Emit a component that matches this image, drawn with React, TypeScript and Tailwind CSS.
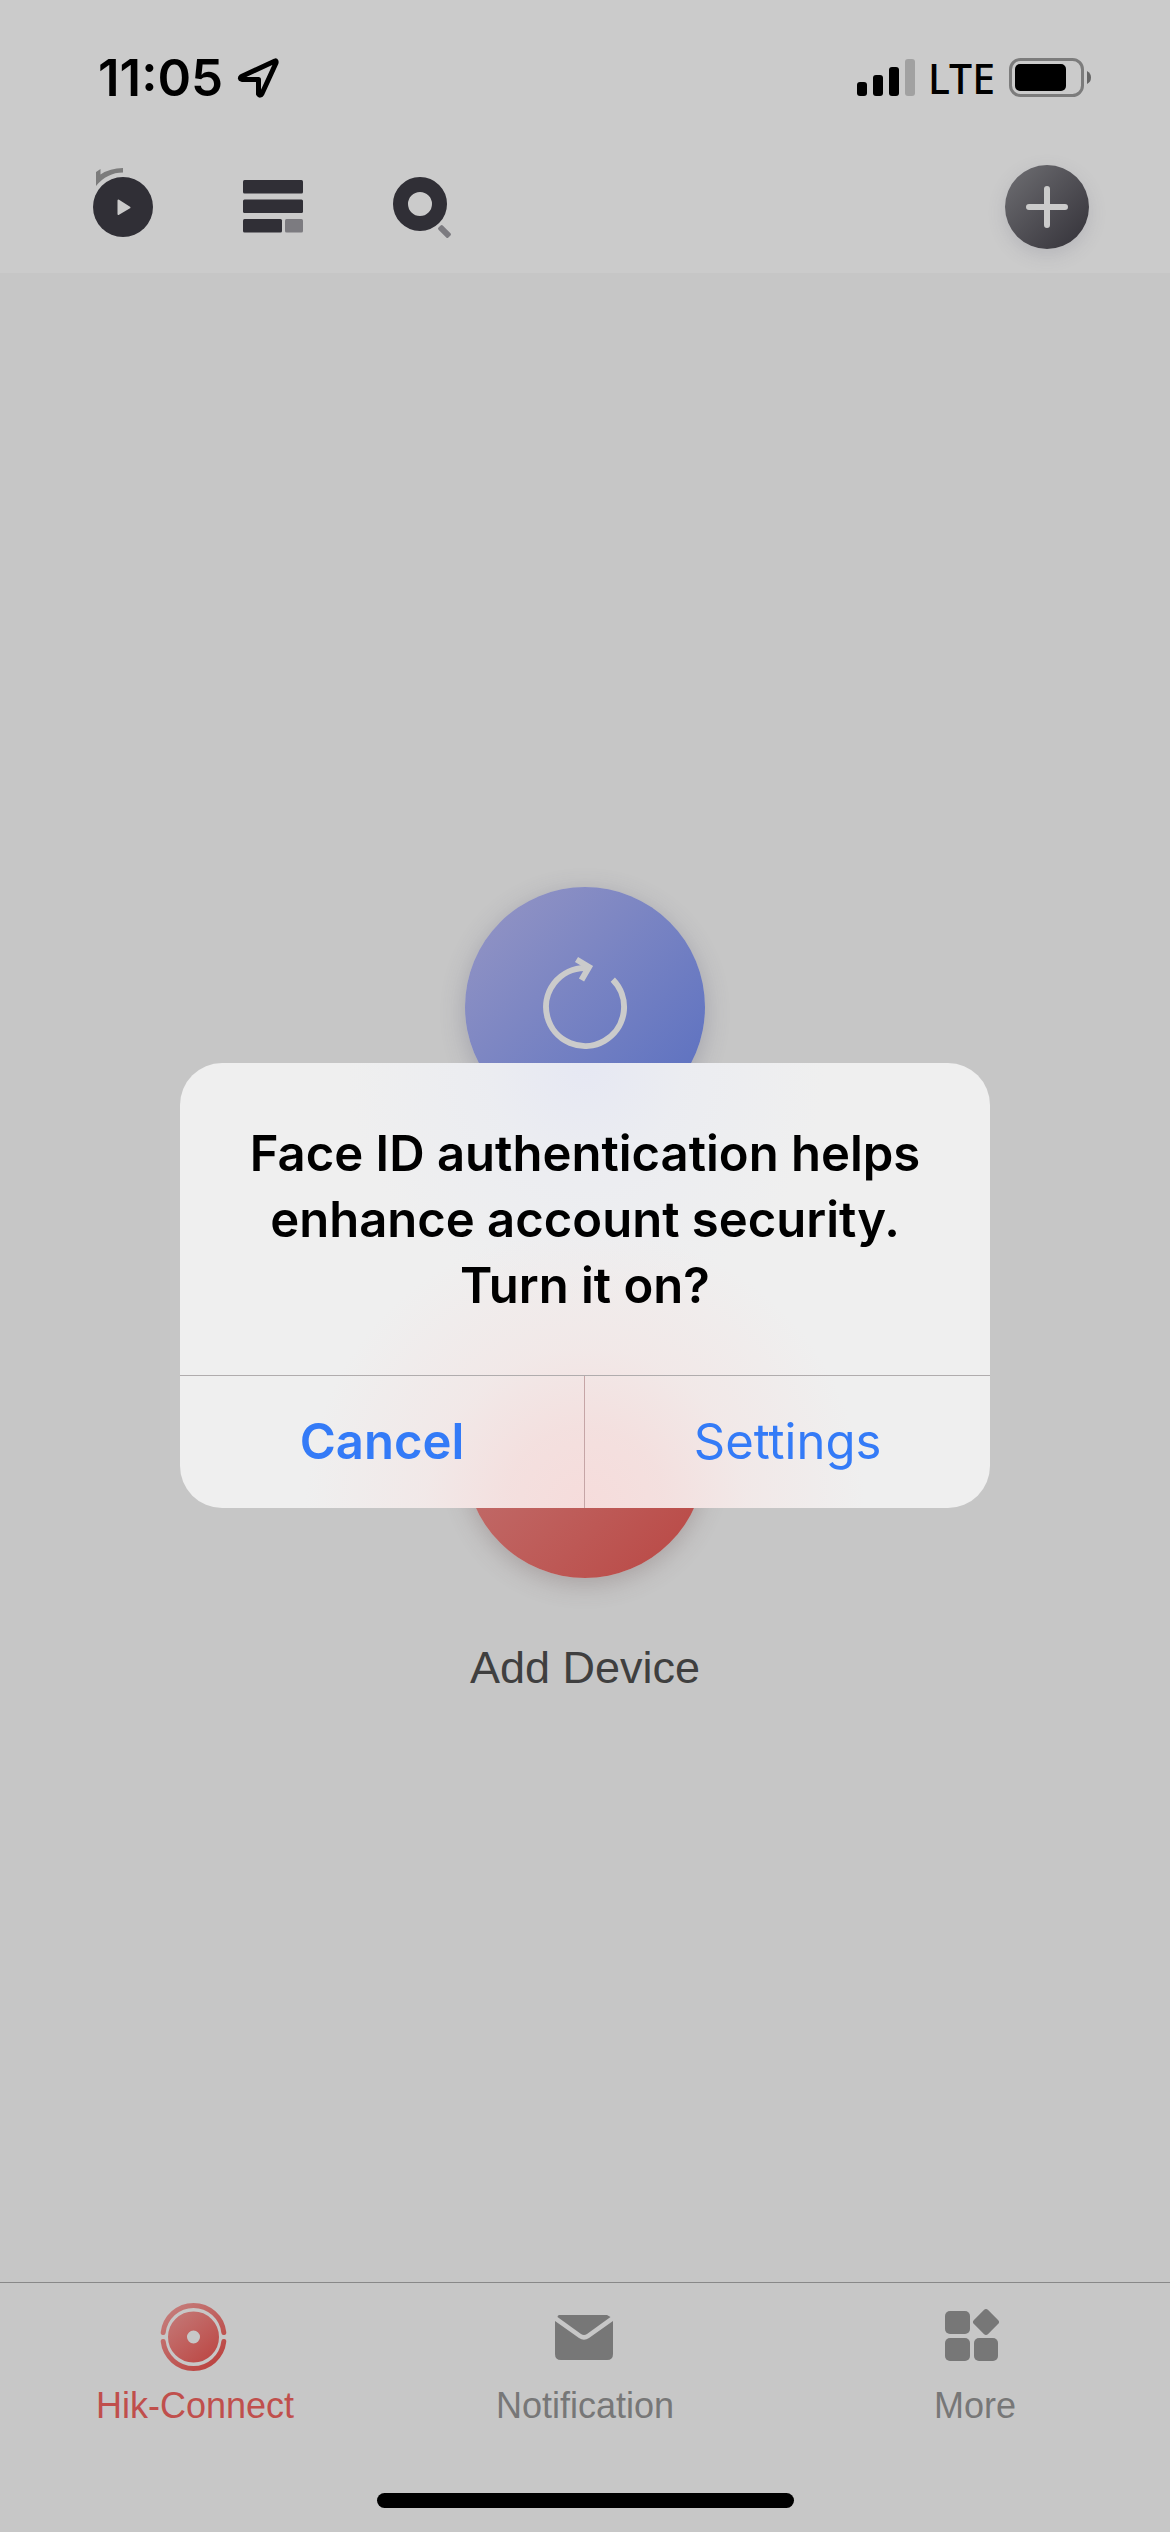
import type { ReactNode } from "react";

const uiFont = "font-[Inter,Roboto,sans-serif]";
const bodyFont = "font-['Liberation_Sans',Arial,sans-serif]";

function StatusBar() {
  return (
    <div className={`flex h-[156px] items-start justify-between pt-[42px] pr-[78px] pl-[98px] text-black ${uiFont}`}>
      <div className="flex h-[72px] items-center gap-[14px]">
        <span className="text-[51px] leading-[72px] font-semibold">11:05</span>
        <svg className="h-[40px] w-[42px]" viewBox="0 0 42 40" fill="none" aria-label="Location in use">
          <path d="M38 3 L4.500 18.500 Q2 20.500 5 21.500 L21.500 21.500 L21.500 36 Q23 38.500 25 35.500 L39 5 Q39.500 2.500 38 3 Z" stroke="black" strokeWidth="5" strokeLinejoin="round" />
        </svg>
      </div>
      <div className="flex h-[72px] items-center">
        <svg className="h-[38px] w-[60px]" viewBox="0 0 60 38" aria-label="Signal strength">
          <rect x="1" y="23" width="10" height="14" rx="3" />
          <rect x="17" y="16" width="10" height="21" rx="3" />
          <rect x="33" y="8" width="10" height="29" rx="3" />
          <rect x="49" y="0" width="10" height="37" rx="3" fill="#a1a1a1" />
        </svg>
        <span className="ml-[12px] font-['Noto_Sans',sans-serif] text-[41px] leading-[72px] font-medium">LTE</span>
        <svg className="ml-[14px] h-[40px] w-[83px]" viewBox="0 0 83 40" aria-label="Battery">
          <rect x="1.500" y="1.500" width="72" height="36" rx="10" fill="none" stroke="#7c7c7c" strokeWidth="3" />
          <rect x="6" y="6" width="51" height="27" rx="5" />
          <path d="M78 13 Q82 15 82 19.500 Q82 24 78 26 Z" fill="#666666" />
        </svg>
      </div>
    </div>
  );
}

function Toolbar() {
  return (
    <div className="flex h-[117px] items-start justify-between pr-[81px] pl-[93px]">
      <div className="flex items-start gap-[90px] pt-[9px]">
        <button type="button" aria-label="Playback">
          <svg className="h-[72px] w-[60px]" viewBox="0 0 60 72">
            <path d="M3 7 L7.500 4 L7.500 9.500 Q17 3 30 3 L30 7.500 Q14 7.500 3 21 Z" fill="#7c7c7c" />
            <circle cx="30" cy="42" r="30" fill="#302f36" />
            <path d="M25.500 35.500 L36.500 42.500 L25.500 49 Z" fill="#cbcbcb" stroke="#cbcbcb" strokeWidth="2" strokeLinejoin="round" />
          </svg>
        </button>
        <button type="button" aria-label="List view">
          <svg className="h-[72px] w-[60px]" viewBox="0 0 60 72">
            <g fill="#302f36">
              <rect y="15" width="60" height="13.500" rx="1.500" />
              <rect y="34.500" width="60" height="13.500" rx="1.500" />
              <rect y="54" width="39" height="13.500" rx="1.500" />
            </g>
            <rect x="42" y="54" width="18" height="13.500" rx="1.500" fill="#7c7b80" />
          </svg>
        </button>
        <button type="button" aria-label="Search">
          <svg className="h-[74px] w-[60px]" viewBox="0 0 60 74">
            <circle cx="27" cy="39" r="19.500" fill="none" stroke="#302f36" strokeWidth="15" />
            <rect x="44.500" y="63.500" width="14" height="6" rx="1.500" transform="rotate(45 51.500 66.500)" fill="#7c7b80" />
          </svg>
        </button>
      </div>
      <button
        type="button"
        aria-label="Add"
        className="mt-[9px] flex size-[84px] items-center justify-center rounded-full bg-linear-to-br from-[#707074] to-[#333138] shadow-[0_6px_18px_rgba(90,90,110,0.18)]"
      >
        <svg className="size-[42px]" viewBox="0 0 42 42" stroke="#cbcbcb" strokeWidth="6" strokeLinecap="round">
          <path d="M21 3 V39 M3 21 H39" />
        </svg>
      </button>
    </div>
  );
}

function Actions() {
  return (
    <main className="flex flex-1 flex-col items-center justify-center gap-[211px] bg-[#c6c6c6] pt-[26px]">
      <button
        type="button"
        aria-label="Refresh"
        className="flex size-[240px] items-center justify-center rounded-full bg-linear-to-br from-[#9696c4] to-[#576dc0] shadow-[0_6px_24px_rgba(80,80,110,0.3)]"
      >
        <svg className="size-[102px]" viewBox="0 0 102 102" fill="none" stroke="#cbcbcb" strokeWidth="6">
          <path d="M78.800 23.600 A39 39 0 1 1 51 12 L54 12" />
          <path d="M42.500 3.500 L55 11 L47.500 24" />
        </svg>
      </button>
      <div className="flex flex-col items-center gap-[64px]">
        <button
          type="button"
          aria-label="Add Device"
          className="size-[240px] rounded-full bg-linear-to-br from-[#c37a7a] to-[#b94542] shadow-[0_6px_24px_rgba(100,75,75,0.3)]"
        />
        <span className="text-[45px] leading-[52px] text-[#3f3f3f]">Add Device</span>
      </div>
    </main>
  );
}

function Tab({ label, active, children }: { label: string; active?: boolean; children: ReactNode }) {
  return (
    <a
      href="#"
      aria-current={active ? "page" : undefined}
      className={`flex flex-1 flex-col items-center gap-[12px] pt-[18px] ${active ? "text-[#c04f4c]" : "text-[#777777]"}`}
    >
      <svg className="h-[72px] w-[72px]" viewBox="0 0 72 72">
        {children}
      </svg>
      <span className="text-[36px] leading-[42px]">{label}</span>
    </a>
  );
}

function TabBar() {
  return (
    <nav className="flex h-[250px] flex-col border-t border-[#888888] bg-[#c7c7c7]">
      <div className="flex flex-1">
        <Tab label="Hik-Connect" active>
          <defs>
            <linearGradient id="brand" gradientUnits="userSpaceOnUse" x1="12" y1="10" x2="54" y2="62">
              <stop offset="0" stopColor="#c47a78" />
              <stop offset="1" stopColor="#bc4643" />
            </linearGradient>
          </defs>
          <g fill="none" stroke="url(#brand)" strokeWidth="5" strokeLinecap="round">
            <path d="M4.200 31.500 A30.500 30.500 0 0 1 64.800 31.500" />
            <path d="M4.200 40.500 A30.500 30.500 0 0 0 64.800 40.500" />
          </g>
          <circle cx="34.500" cy="36" r="16" fill="none" stroke="url(#brand)" strokeWidth="19" />
        </Tab>
        <Tab label="Notification">
          <g fill="currentColor" transform="translate(-1 0)">
            <path d="M11 14 H59 L62.500 16 L39 33 Q36 35 33 33 L9.500 16 Q9.500 14.500 11 14 Z" />
            <path d="M7 20 L31 37 Q36 40.500 41 37 L65 20 V53 Q65 59 59 59 H13 Q7 59 7 53 Z" />
          </g>
        </Tab>
        <Tab label="More">
          <g fill="currentColor">
            <rect x="6" y="10" width="25" height="23" rx="5" />
            <rect x="6" y="37" width="25" height="23" rx="5" />
            <rect x="35" y="37" width="24" height="23" rx="5" />
            <rect x="37" y="11" width="20" height="20" rx="3" transform="rotate(45 47 21)" />
          </g>
        </Tab>
      </div>
      <div className="mx-auto mb-[24px] h-[15px] w-[417px] rounded-full bg-black" />
    </nav>
  );
}

function FaceIdAlert() {
  return (
    <div className={`absolute inset-0 flex items-center justify-center pt-[39px] ${uiFont}`}>
      <div
        role="alertdialog"
        aria-labelledby="alert-title"
        className="w-[810px] overflow-hidden rounded-[42px] bg-[#efefef] bg-[radial-gradient(circle_at_50%_100%,#f6dcdb_0,rgba(244,222,221,0.9)_80px,rgba(243,228,227,0.6)_160px,rgba(239,239,239,0)_280px),radial-gradient(circle_at_50%_0,#e6e8f3_0,rgba(233,235,242,0.6)_100px,rgba(239,239,239,0)_240px)]"
      >
        <h1 id="alert-title" className="px-[48px] pt-[58px] pb-[56px] text-center text-[49px] leading-[66px] font-semibold text-black">
          Face ID authentication helps enhance account security. Turn it on?
        </h1>
        <div className="grid grid-cols-2 border-t border-[#b0acad] text-[49px] leading-[60px] text-[#347bf7]">
          <button type="button" className="h-[132px] border-r border-[#c5a5a6] font-semibold">
            Cancel
          </button>
          <button type="button" className="h-[132px]">
            Settings
          </button>
        </div>
      </div>
    </div>
  );
}

export default function App() {
  return (
    <div className={`relative flex min-h-screen flex-col bg-[#c6c6c6] ${bodyFont}`}>
      <header className="bg-[#cbcbcb]">
        <StatusBar />
        <Toolbar />
      </header>
      <Actions />
      <TabBar />
      <FaceIdAlert />
    </div>
  );
}
